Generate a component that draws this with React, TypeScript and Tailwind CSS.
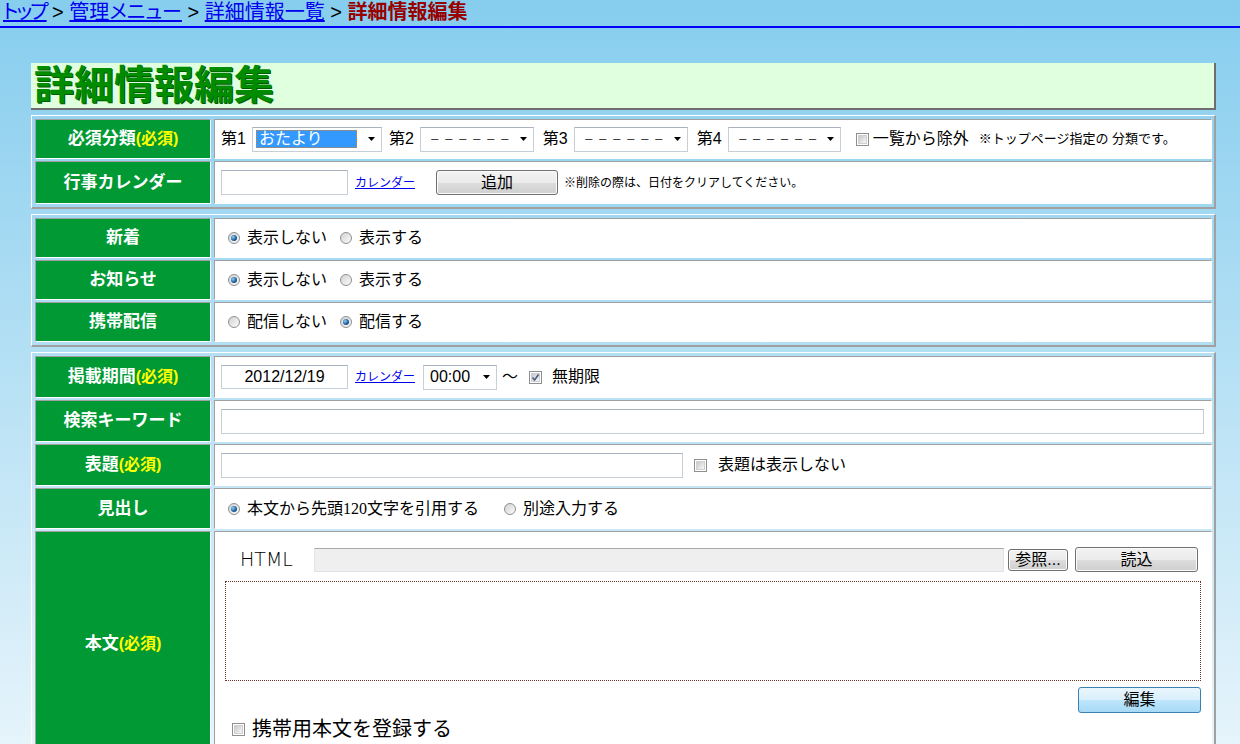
import type { ReactNode } from "react";

// ────────────────────────────────────────────────────────────────────────────
// Shared styles
// ────────────────────────────────────────────────────────────────────────────

const CELL_BORDER =
  "border border-t-[#a0a0a0] border-l-[#a0a0a0] border-r-white border-b-white";

const INPUT_BORDER =
  "border border-[#c6ced8] border-t-[#a9b3bf] bg-white";

const GRAY_BUTTON =
  "flex items-center justify-center rounded-[3px] border border-[#707070] bg-[linear-gradient(#f2f2f2_0%,#ebebeb_50%,#dddddd_51%,#cfcfcf_100%)] shadow-[inset_0_0_0_1px_#fbfbfb] text-[16px] text-black";

// ────────────────────────────────────────────────────────────────────────────
// Small form controls
// ────────────────────────────────────────────────────────────────────────────

function Radio({ checked, className = "" }: { checked?: boolean; className?: string }) {
  return (
    <span
      className={`inline-flex h-[12px] w-[12px] shrink-0 items-center justify-center rounded-full border border-[#8e8f8f] bg-[linear-gradient(135deg,#d2d2d2,#fbfbfb)] ${className}`}
    >
      {checked && (
        <span className="h-[6px] w-[6px] rounded-full bg-[radial-gradient(circle_at_35%_35%,#8fd0f5,#1d5f9e_55%,#0b3465)]" />
      )}
    </span>
  );
}

function Checkbox({ checked, className = "" }: { checked?: boolean; className?: string }) {
  return (
    <span
      className={`relative inline-flex h-[13px] w-[13px] shrink-0 items-center justify-center border border-[#8e8f8f] bg-white ${className}`}
    >
      <span className="h-[9px] w-[9px] border border-[#d0d0d0] bg-[linear-gradient(135deg,#c8c8c8,#f7f7f7)]" />
      {checked && (
        <svg className="absolute left-[1px] top-[1px]" width="9" height="9" viewBox="0 0 9 9">
          <path d="M1.5 4.5 L3.6 7 L7.6 1.5" fill="none" stroke="#4b5d86" strokeWidth="1.6" />
        </svg>
      )}
    </span>
  );
}

function Select({ className = "", children }: { className?: string; children: ReactNode }) {
  return (
    <div
      className={`flex h-[25px] shrink-0 items-center justify-between pl-[3px] pr-[6px] ${INPUT_BORDER} ${className}`}
    >
      {children}
      <svg width="7" height="4" viewBox="0 0 7 4" className="shrink-0">
        <path d="M0 0h7L3.5 4z" fill="#000" />
      </svg>
    </div>
  );
}

function Dashes() {
  return (
    <span className="pl-[6px] text-[10px] tracking-[4px] text-black">－－－－－－</span>
  );
}

function CalendarLink({ className = "" }: { className?: string }) {
  return (
    <a className={`text-[12px] text-[#0000ee] underline ${className}`}>カレンダー</a>
  );
}

// ────────────────────────────────────────────────────────────────────────────
// Table pieces
// ────────────────────────────────────────────────────────────────────────────

function Panel({ children }: { children: ReactNode }) {
  return (
    <div className="flex flex-col gap-[2px] border-t border-l border-r-2 border-b-2 border-t-white border-l-white border-r-[#a0a0a0] border-b-[#a0a0a0] p-[3px] pr-[2px]">
      {children}
    </div>
  );
}

function Row({
  label,
  required,
  height,
  children,
  valueClass = "flex items-center pl-[6px]",
}: {
  label: string;
  required?: boolean;
  height: string;
  children: ReactNode;
  valueClass?: string;
}) {
  return (
    <div className={`flex gap-[3px] ${height}`}>
      <div
        className={`flex w-[176px] shrink-0 items-center justify-center bg-[#009933] text-[17px] font-bold text-white ${CELL_BORDER}`}
      >
        {label}
        {required && <span className="text-[16px] text-[#ffff00]">(必須)</span>}
      </div>
      <div className={`min-w-0 flex-1 bg-white text-[16px] text-black ${CELL_BORDER} ${valueClass}`}>
        {children}
      </div>
    </div>
  );
}

// ────────────────────────────────────────────────────────────────────────────
// Page
// ────────────────────────────────────────────────────────────────────────────

export default function App() {
  return (
    <div className="min-h-screen bg-fixed bg-[linear-gradient(180deg,#86cdee_0%,#e6f4fb_100%)] pb-[20px] font-['Liberation_Sans','Noto_Sans_CJK_JP',sans-serif]">
      {/* Breadcrumb */}
      <div className="h-[28px] whitespace-nowrap border-b-2 border-[#0000ff] pl-[3px] text-[20px] leading-[24px] [font-feature-settings:'palt']">
        <a className="tracking-[-2px] text-[#0000ee] underline">トップ</a>
        {" > "}
        <a className="text-[#0000ee] underline">管理メニュー</a>
        {" > "}
        <a className="text-[#0000ee] underline">詳細情報一覧</a>
        {" > "}
        <span className="font-bold text-[#990000]">詳細情報編集</span>
      </div>

      <div className="ml-[31px] mt-[35px] flex w-[1185px] flex-col gap-[5px]">
        {/* Title */}
        <div className="flex h-[47px] items-center border-r-2 border-b-2 border-[#6e6e6e] bg-[#dfffdf] pb-[2px] pl-[3px]">
          <h1 className="text-[40px] font-bold leading-none text-[#008c00] [text-shadow:1px_1px_0_#005a00]">
            詳細情報編集
          </h1>
        </div>

        {/* Category / calendar */}
        <Panel>
          <Row label="必須分類" required height="h-[40px]">
            <span>第1</span>
            <Select className="ml-[6px] w-[130px]">
              <span className="h-[18px] w-[101px] border border-dotted border-[#d9822b] bg-[#3399ff] pl-[2px] text-[16px] leading-[16px] text-white">
                おたより
              </span>
            </Select>
            <span className="ml-[7px]">第2</span>
            <Select className="ml-[6px] w-[114px]">
              <Dashes />
            </Select>
            <span className="ml-[9px]">第3</span>
            <Select className="ml-[6px] w-[114px]">
              <Dashes />
            </Select>
            <span className="ml-[9px]">第4</span>
            <Select className="ml-[6px] w-[113px]">
              <Dashes />
            </Select>
            <Checkbox className="ml-[15px]" />
            <span className="ml-[4px]">一覧から除外</span>
            <span className="ml-[10px] text-[13px]">※トップページ指定の 分類です。</span>
          </Row>
          <Row label="行事カレンダー" height="h-[43px]">
            <div className={`h-[25px] w-[127px] ${INPUT_BORDER}`} />
            <CalendarLink className="ml-[7px]" />
            <button className={`ml-[21px] h-[25px] w-[122px] ${GRAY_BUTTON}`}>追加</button>
            <span className="ml-[6px] text-[12px]">※削除の際は、日付をクリアしてください。</span>
          </Row>
        </Panel>

        {/* Display flags */}
        <Panel>
          <Row label="新着" height="h-[40px]">
            <Radio checked className="ml-[7px]" />
            <span className="ml-[7px]">表示しない</span>
            <Radio className="ml-[13px]" />
            <span className="ml-[7px]">表示する</span>
          </Row>
          <Row label="お知らせ" height="h-[40px]">
            <Radio checked className="ml-[7px]" />
            <span className="ml-[7px]">表示しない</span>
            <Radio className="ml-[13px]" />
            <span className="ml-[7px]">表示する</span>
          </Row>
          <Row label="携帯配信" height="h-[40px]">
            <Radio className="ml-[7px]" />
            <span className="ml-[7px]">配信しない</span>
            <Radio checked className="ml-[13px]" />
            <span className="ml-[7px]">配信する</span>
          </Row>
        </Panel>

        {/* Article details */}
        <Panel>
          <Row label="掲載期間" required height="h-[42px]">
            <div className={`flex h-[24px] w-[127px] items-center justify-center ${INPUT_BORDER}`}>
              2012/12/19
            </div>
            <CalendarLink className="ml-[7px]" />
            <Select className="ml-[8px] w-[74px]">
              <span className="pl-[3px]">00:00</span>
            </Select>
            <span className="ml-[5px]">〜</span>
            <Checkbox checked className="ml-[11px]" />
            <span className="ml-[10px]">無期限</span>
          </Row>
          <Row label="検索キーワード" height="h-[42px]">
            <div className={`h-[25px] w-[983px] ${INPUT_BORDER}`} />
          </Row>
          <Row label="表題" required height="h-[42px]">
            <div className={`h-[25px] w-[462px] ${INPUT_BORDER}`} />
            <Checkbox className="ml-[11px]" />
            <span className="ml-[11px]">表題は表示しない</span>
          </Row>
          <Row label="見出し" height="h-[41px]">
            <Radio checked className="ml-[7px]" />
            <span className="ml-[7px]">
              本文から先頭<span className="font-['Liberation_Serif']">120</span>文字を引用する
            </span>
            <Radio className="ml-[25px]" />
            <span className="ml-[7px]">別途入力する</span>
          </Row>
          <Row
            label="本文"
            required
            height="h-[226px]"
            valueClass="flex flex-col px-[10px] pt-[15px]"
          >
            <div className="flex h-[25px] items-center pr-[3px]">
              <span className="ml-[15px] w-[74px] font-['DejaVu_Sans'] text-[19px] font-extralight">
                HTML
              </span>
              <div className="h-[24px] flex-1 border border-[#dfe4ea] border-t-[#a8a8a8] bg-[#efefef]" />
              <button className={`ml-[4px] h-[22px] w-[60px] ${GRAY_BUTTON}`}>参照...</button>
              <button className={`ml-[7px] h-[25px] w-[123px] ${GRAY_BUTTON}`}>読込</button>
            </div>
            <div className="mt-[9px] h-[100px] border border-dotted border-[#6e3426] bg-white" />
            <button className="mt-[6px] flex h-[26px] w-[123px] items-center justify-center self-end rounded-[3px] border border-[#3c7fb1] bg-[linear-gradient(#eaf6fd_0%,#d9f0fc_50%,#bee6fd_51%,#a7d9f5_100%)] text-[16px] text-black">
              編集
            </button>
            <div className="mt-[4px] flex items-center">
              <Checkbox className="ml-[7px]" />
              <span className="ml-[7px] text-[20px] leading-[24px]">携帯用本文を登録する</span>
            </div>
          </Row>
        </Panel>
      </div>
    </div>
  );
}
